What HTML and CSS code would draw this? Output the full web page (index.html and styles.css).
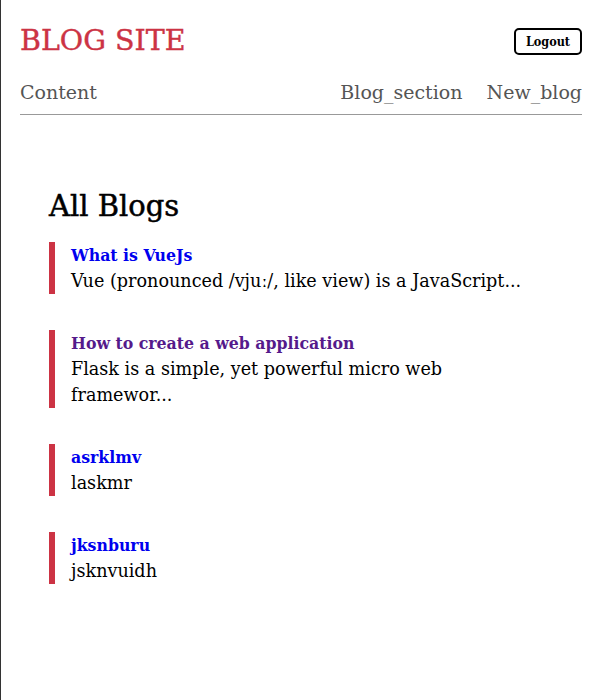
FILE: index.html
```html
<!DOCTYPE html>
<html>
<head>
<meta charset="utf-8">
<link rel="stylesheet" href="styles.css">
</head>
<body>
<div class="page">
  <header class="top">
    <div class="brand-row">
      <h1 class="brand">BLOG SITE</h1>
      <button class="logout">Logout</button>
    </div>
    <nav class="nav">
      <a class="nav-link" href="#">Content</a>
      <div class="nav-right">
        <a class="nav-link" href="#">Blog_section</a>
        <a class="nav-link" href="#">New_blog</a>
      </div>
    </nav>
  </header>
  <main class="main">
    <h2 class="title">All Blogs</h2>
    <div class="blog">
      <a class="blog-title" href="#">What is VueJs</a>
      <p class="blog-text">Vue (pronounced /vjuː/, like view) is a JavaScript...</p>
    </div>
    <div class="blog">
      <a class="blog-title visited" href="#">How to create a web application</a>
      <p class="blog-text">Flask is a simple, yet powerful micro web framewor...</p>
    </div>
    <div class="blog">
      <a class="blog-title" href="#">asrklmv</a>
      <p class="blog-text">laskmr</p>
    </div>
    <div class="blog">
      <a class="blog-title" href="#">jksnburu</a>
      <p class="blog-text">jsknvuidh</p>
    </div>
  </main>
</div>
</body>
</html>
```
FILE: styles.css
```css
html, body {
  margin: 0;
  padding: 0;
  height: 100%;
}
body {
  font-family: "DejaVu Serif", serif;
  color: #000;
  background: #fff;
  border-left: 1px solid #333;
  box-sizing: border-box;
}
.page {
  padding: 0 19px 0 19px;
}
.top {
  border-bottom: 1px solid #999;
}
.brand-row {
  display: flex;
  justify-content: space-between;
  align-items: center;
  padding-top: 20px;
  height: 42px;
}
.brand {
  margin: 0;
  font-size: 28.5px;
  font-weight: normal;
  color: #cc3344;
  line-height: 40px;
  -webkit-text-stroke: 0.4px #cc3344;
}
.logout {
  font-family: "DejaVu Serif", serif;
  font-stretch: condensed;
  font-size: 12.5px;
  font-weight: bold;
  background: #fff;
  border: 2px solid #000;
  border-radius: 5px;
  padding: 0;
  width: 68px;
  height: 27px;
  color: #000;
}
.nav {
  display: flex;
  justify-content: space-between;
  padding-top: 17px;
  padding-bottom: 9px;
}
.nav-right {
  display: flex;
  gap: 24px;
}
.nav-link {
  color: #555;
  text-decoration: none;
  font-size: 19px;
  line-height: 26px;
}
.main {
  padding: 71px 29px 0 29px;
}
.title {
  margin: 0 0 16px 0;
  font-size: 29px;
  font-weight: normal;
  line-height: 40px;
  -webkit-text-stroke: 0.5px #000;
}
.blog {
  border-left: 6px solid #cc3344;
  padding-left: 16px;
  margin-bottom: 36px;
}
.blog-title {
  display: block;
  color: #0000ee;
  text-decoration: none;
  font-weight: bold;
  font-stretch: condensed;
  font-size: 17.5px;
  line-height: 26px;
}
.blog-title.visited {
  color: #551a8b;
}
.blog-text {
  margin: 0;
  max-width: 465px;
  font-size: 17.6px;
  line-height: 26px;
}
```
